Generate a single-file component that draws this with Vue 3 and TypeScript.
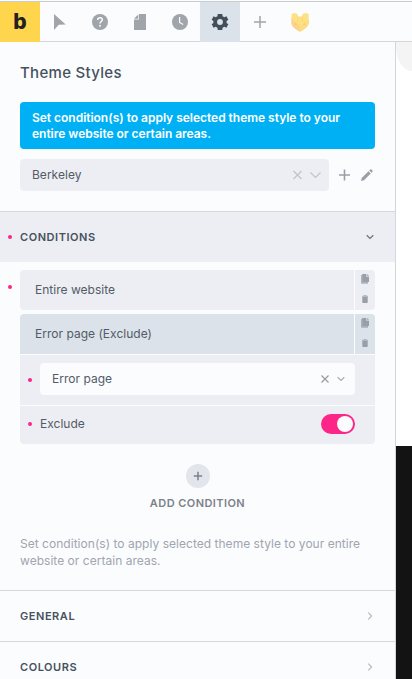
<script setup lang="ts">
import { ref } from 'vue'

interface Condition {
  label: string
  active: boolean
}

const conditions: Condition[] = [
  { label: 'Entire website', active: false },
  { label: 'Error page (Exclude)', active: true },
]
const sections: string[] = ['General', 'Colours']
const hint = 'Set condition(s) to apply selected theme style to your entire website or certain areas.'
const exclude = ref(true)
</script>

<template>
  <div class="app">
    <header class="toolbar">
      <div class="tool logo">b</div>
      <div class="tool">
        <svg width="20" height="20" viewBox="0 0 20 20"><path d="M4 2L15.700 12.500L8.800 12.700L4 18Z" fill="currentColor" /></svg>
      </div>
      <div class="tool">
        <svg width="20" height="20" viewBox="0 0 20 20">
          <circle cx="10" cy="10" r="8" fill="currentColor" />
          <path d="M7.700 8C7.700 6.500 8.700 5.800 10 5.800S12.300 6.600 12.300 7.800C12.300 9.500 10 9.500 10 11.400" fill="none" stroke="#fbfcfe" stroke-width="1.500" />
          <circle cx="10" cy="13.700" r=".95" fill="#fbfcfe" />
        </svg>
      </div>
      <div class="tool">
        <svg width="20" height="20" viewBox="0 0 20 20">
          <path d="M9 2H16V18H4V7.500H9Z" fill="currentColor" />
          <path d="M8.300 2.500V6.800H4Z" fill="currentColor" />
        </svg>
      </div>
      <div class="tool">
        <svg width="20" height="20" viewBox="0 0 20 20">
          <circle cx="10" cy="10" r="8" fill="currentColor" />
          <path d="M9.600 5V10.500L13.200 12.600" fill="none" stroke="#fbfcfe" stroke-width="1.200" />
        </svg>
      </div>
      <div class="tool active">
        <svg width="20" height="20" viewBox="0 0 24 24">
          <path fill="currentColor" d="M19.900 13.200a8 8 0 0 0 0-2.400l2.100-1.600-2.300-4-2.500 1a8 8 0 0 0-2.100-1.200L14.700 2.300H9.300L8.900 5a8 8 0 0 0-2.100 1.200l-2.500-1-2.300 4 2.100 1.600a8 8 0 0 0 0 2.400L2 14.800l2.300 4 2.500-1A8 8 0 0 0 8.900 19l.4 2.700h5.400l.4-2.700a8 8 0 0 0 2.100-1.200l2.500 1 2.300-4zM12 15.500a3.500 3.500 0 1 1 0-7 3.500 3.500 0 0 1 0 7z" />
        </svg>
      </div>
      <div class="tool">
        <svg width="20" height="20" viewBox="0 0 20 20"><path d="M10 4V16M4 10H16" stroke="currentColor" stroke-width="1.500" /></svg>
      </div>
      <div class="tool">
        <svg width="20" height="20" viewBox="0 0 20 20">
          <path d="M1.500 2.500Q2.500.8 4 1.300Q6.500.7 7.700 2.500V5Q10 3.600 12.300 5V2.500Q13.500.7 16 1.300Q17.500.8 18.700 2.500V11.500Q18 15.500 10 19.700Q2 15.500 1.500 11.500Z" fill="#fde283" />
          <path d="M1.500 6Q4 7 5 10L10 14V19.700Q2 15.500 1.500 11.500Z" fill="#fcd28e" />
          <path d="M18.700 7Q16 8 15 11L10 14V19.700Q18 15.500 18.700 11.500Z" fill="#fddc82" />
          <path d="M7.700 4V10M12.300 4V10" stroke="#f9d56f" stroke-width=".8" fill="none" />
          <circle cx="5.800" cy="12" r=".6" fill="#d8a951" /><circle cx="14.300" cy="12" r=".6" fill="#d8a951" />
        </svg>
      </div>
    </header>

    <div class="workspace">
      <main class="panel">
        <section class="intro">
          <h1>Theme Styles</h1>
          <p class="notice">{{ hint }}</p>
          <div class="picker">
            <div class="select">
              <span>Berkeley</span>
              <svg class="pale" width="30" height="12" viewBox="0 0 30 12" fill="none" stroke="currentColor" stroke-width="1.200">
                <path d="M1.500 2L9.500 10M9.500 2L1.500 10M18.500 3.500L23.500 8.500L28.500 3.500" />
              </svg>
            </div>
            <svg class="plus" width="12" height="12" viewBox="0 0 12 12"><path d="M6.500 .5V11.500M1 6H12" stroke="currentColor" stroke-width="1.600" /></svg>
            <svg class="pencil" width="12" height="12" viewBox="0 0 12 12" fill="currentColor">
              <path d="M0 12L.7 9L7.500 2.200L9.800 4.500L3 11.300Z" /><path d="M8.200 1.500L9.200.5Q9.800 0 10.400.5L11.500 1.600Q12 2.200 11.500 2.800L10.500 3.800Z" />
            </svg>
          </div>
        </section>

        <div class="section open">
          <i class="dot head-dot"></i>
          <h2>Conditions</h2>
          <svg width="10" height="10" viewBox="0 0 10 10"><path d="M1.700 3.300L5 6.500L8.300 3.300" fill="none" stroke="currentColor" stroke-width="1.200" /></svg>
        </div>

        <section class="conditions">
          <i class="dot list-dot"></i>
          <div v-for="item in conditions" :key="item.label" class="condition" :class="{ selected: item.active }">
            <div class="row">
              <span class="name">{{ item.label }}</span>
              <div class="actions">
                <svg width="10" height="10" viewBox="0 0 10 10" fill="currentColor">
                  <path d="M2.200 0H6.200V2.300Q6.200 2.800 6.700 2.800H9V8H2.200Z" />
                  <path d="M6.700 0H7.200L9 1.800V2.300H6.700Z" opacity=".7" />
                  <path d="M1 1H2.200V8H8V9.700H2Q1 9.700 1 8.700Z" opacity=".75" />
                </svg>
                <svg width="10" height="10" viewBox="0 0 10 10" fill="currentColor">
                  <path d="M2 1.800H8V2.700H2ZM3.800 1H6.200V1.800H3.800Z" opacity=".7" /><path d="M2.300 2.800H7.700V8.200Q7.700 9 6.900 9H3.100Q2.300 9 2.300 8.200Z" />
                </svg>
              </div>
            </div>
            <template v-if="item.active">
              <div class="field value">
                <i class="dot"></i>
                <div class="input">
                  <span>Error page</span>
                  <svg width="26" height="10" viewBox="0 0 26 10" fill="none">
                    <path d="M1.500 1.500L8.500 8.500M8.500 1.500L1.500 8.500" stroke="#969ca3" stroke-width="1.200" />
                    <path d="M17.700 3.300L21 6.500L24.300 3.300" stroke="#a8adb4" stroke-width="1.200" />
                  </svg>
                </div>
              </div>
              <div class="field switch">
                <i class="dot"></i>
                <span class="caption">Exclude</span>
                <div class="toggle" :class="{ on: exclude }" @click="exclude = !exclude"><b></b></div>
              </div>
            </template>
          </div>

          <div class="add">
            <div class="add-icon">
              <svg width="10" height="10" viewBox="0 0 10 10"><path d="M5 .8V9.200M.8 5H9.200" stroke="currentColor" stroke-width="1.500" /></svg>
            </div>
            <span>Add condition</span>
          </div>
          <p class="hint">{{ hint }}</p>
        </section>

        <div v-for="name in sections" :key="name" class="section">
          <h2>{{ name }}</h2>
          <svg width="10" height="10" viewBox="0 0 10 10"><path d="M3.300 1.700L6.600 5L3.300 8.300" fill="none" stroke="currentColor" stroke-width="1.200" /></svg>
        </div>
      </main>
      <aside class="preview">
        <div class="preview-head"></div>
        <div class="preview-foot"></div>
      </aside>
    </div>
  </div>
</template>

<style>
body { margin: 0; overflow: hidden; }
</style>

<style scoped>
* { box-sizing: border-box; }
.app {
  display: flex; flex-direction: column; width: 412px; height: 679px; overflow: hidden;
  padding-top: 1px; background: #fbfcfe; color: #525b66;
  font-family: Inter, "Liberation Sans", sans-serif; font-size: 12px; letter-spacing: .02px;
}
svg { display: block; flex: none; }
h1, h2, p { margin: 0; }
.toolbar { display: flex; flex: none; height: 41px; border-top: 1px solid #c9cbce; box-shadow: inset 0 -1px #d3d7dc; }
.tool { display: flex; align-items: center; justify-content: center; width: 40px; height: 40px; color: #a0a5ac; }
.logo { background: #ffd54d; color: #212121; font-size: 21px; font-weight: 800; letter-spacing: 0; line-height: 40px; }
.active { background: #dbe2ea; color: #424e5a; }
.workspace { display: flex; flex: 1; min-height: 0; }
.panel { width: 396px; border-right: 1px solid #d3d6da; overflow: hidden; }
.intro { height: 169px; padding: 20px 20px 0; }
h1 { height: 40px; font-size: 15px; line-height: 22px; font-weight: 500; letter-spacing: .3px; color: #46515e; }
.notice { height: 47px; padding: 8px 12px 0; border-radius: 4px; background: #00b0f5; color: #fff; font-weight: 600; line-height: 16px; letter-spacing: -.02px; }
.picker { display: flex; align-items: center; height: 32px; margin-top: 10px; }
.select { display: flex; align-items: center; justify-content: space-between; width: 309px; height: 32px; padding: 0 7px 1px 12px; border-radius: 4px; background: #edeef3; }
.pale { color: #c1c4ca; }
.plus { margin-left: 9px; color: #9a9fa7; }
.pencil { margin-left: 11px; color: #9a9fa7; }
.section { position: relative; display: flex; align-items: center; justify-content: space-between; height: 51px; padding: 0 20px; border-top: 1px solid #d4d7dc; color: #b7bac0; }
.open { background: #edeef3; color: #68717a; }
h2 { font-size: 11px; font-weight: 600; letter-spacing: .55px; text-transform: uppercase; color: #46515e; }
.dot { position: absolute; width: 4px; height: 4px; border-radius: 50%; background: #fb2688; }
.head-dot { left: 8px; top: 23px; }
.list-dot { left: 8px; top: 23px; }
.conditions { position: relative; height: 328px; padding: 8px 20px 0; }
.condition { overflow: hidden; margin-bottom: 4px; border-radius: 4px; }
.row { display: flex; gap: 1px; height: 40px; }
.name { flex: 1; padding-left: 15px; line-height: 40px; background: #edeef3; }
.actions { display: flex; flex-direction: column; align-items: center; gap: 10px; width: 20px; padding-top: 4px; background: #edeef3; color: #989fa8; }
.selected .name, .selected .actions { background: #dbe2ea; }
.field { position: relative; display: flex; align-items: center; margin-top: 1px; padding: 0 20px; background: #edeef3; }
.field .dot { left: 8px; }
.value { height: 50px; padding-top: 8px; align-items: flex-start; }
.value .dot { top: 23px; }
.input { display: flex; flex: 1; align-items: center; justify-content: space-between; height: 32px; padding: 0 9px 1px 12px; border-radius: 4px; background: #fbfcfe; }
.switch { height: 38px; padding-bottom: 2px; justify-content: space-between; }
.switch .dot { top: 16px; }
.caption { padding-bottom: 2px; }
.toggle { display: flex; width: 34px; height: 20px; padding: 2px; border-radius: 10px; background: #b9bec6; }
.toggle.on { justify-content: flex-end; background: #fb2688; }
.toggle b { width: 16px; height: 16px; border-radius: 50%; background: #fbfcfe; }
.add { display: flex; flex-direction: column; align-items: center; margin-top: 20px; font-size: 11px; font-weight: 600; line-height: 14px; letter-spacing: .43px; text-transform: uppercase; color: #7b828a; }
.add-icon { display: flex; align-items: center; justify-content: center; width: 24px; height: 24px; margin-bottom: 8px; border-radius: 50%; background: #e3e5ec; }
.hint { margin-top: 25px; line-height: 17px; letter-spacing: .03px; color: #a0a5af; }
.preview { display: flex; flex: 1; flex-direction: column; justify-content: space-between; background: #fff; }
.preview-head { height: 29px; border-bottom-left-radius: 16px 24px; background: #f4f4f4; }
.preview-foot { height: 233px; background: #131313; }
</style>
